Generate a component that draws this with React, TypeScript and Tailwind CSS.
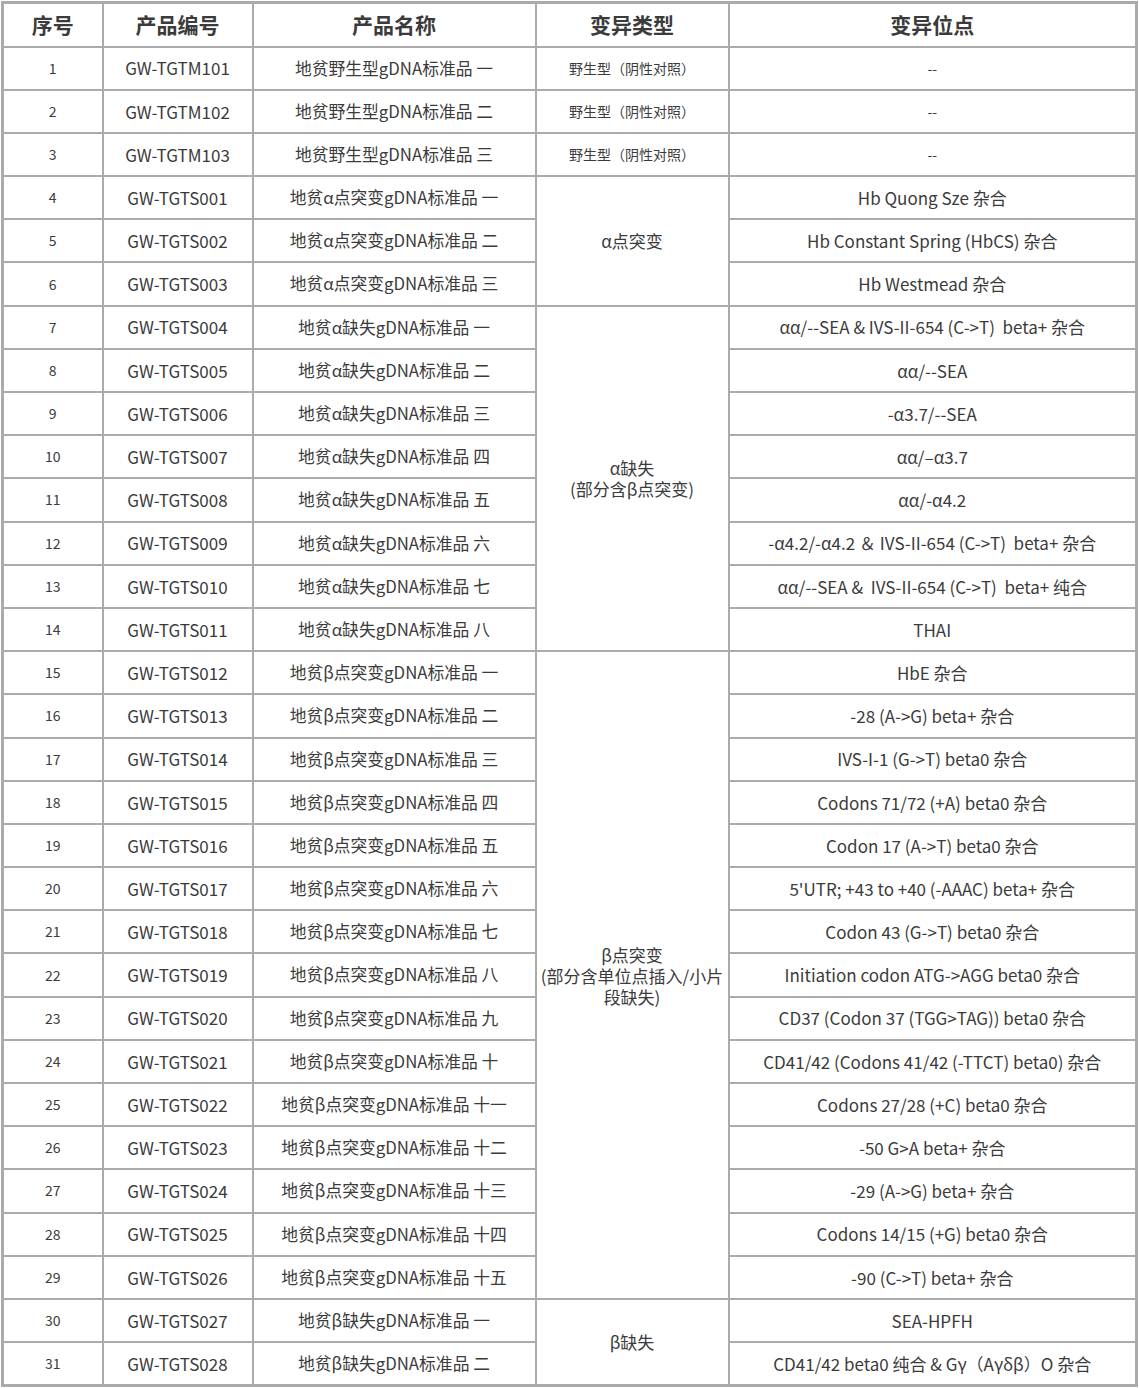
import React from "react";

type Row = {
  no: number;
  code: string;
  name: string;
  site: string;
  type?: { label: React.ReactNode; span: number; small?: boolean };
};

const n = ["一", "二", "三", "四", "五", "六", "七", "八", "九", "十", "十一", "十二", "十三", "十四", "十五"];

const rows: Row[] = [
  { no: 1, code: "GW-TGTM101", name: "地贫野生型gDNA标准品 一", site: "--", type: { label: "野生型（阴性对照）", span: 1, small: true } },
  { no: 2, code: "GW-TGTM102", name: "地贫野生型gDNA标准品 二", site: "--", type: { label: "野生型（阴性对照）", span: 1, small: true } },
  { no: 3, code: "GW-TGTM103", name: "地贫野生型gDNA标准品 三", site: "--", type: { label: "野生型（阴性对照）", span: 1, small: true } },
];

const alphaPoint = ["Hb Quong Sze 杂合", "Hb Constant Spring (HbCS) 杂合", "Hb Westmead 杂合"];
const alphaDel = [
  "αα/--SEA & IVS-II-654 (C->T)  beta+ 杂合",
  "αα/--SEA",
  "-α3.7/--SEA",
  "αα/–α3.7",
  "αα/-α4.2",
  "-α4.2/-α4.2 ＆ IVS-II-654 (C->T)  beta+ 杂合",
  "αα/--SEA &  IVS-II-654 (C->T)  beta+ 纯合",
  "THAI",
];
const betaPoint = [
  "HbE 杂合",
  "-28 (A->G) beta+ 杂合",
  "IVS-I-1 (G->T) beta0 杂合",
  "Codons 71/72 (+A) beta0 杂合",
  "Codon 17 (A->T) beta0 杂合",
  "5'UTR; +43 to +40 (-AAAC) beta+ 杂合",
  "Codon 43 (G->T) beta0 杂合",
  "Initiation codon ATG->AGG beta0 杂合",
  "CD37 (Codon 37 (TGG>TAG)) beta0 杂合",
  "CD41/42 (Codons 41/42 (-TTCT) beta0) 杂合",
  "Codons 27/28 (+C) beta0 杂合",
  "-50 G>A beta+ 杂合",
  "-29 (A->G) beta+ 杂合",
  "Codons 14/15 (+G) beta0 杂合",
  "-90 (C->T) beta+ 杂合",
];
const betaDel = ["SEA-HPFH", "CD41/42 beta0 纯合 & Gγ（Aγδβ）O 杂合"];

let seq = 4;
let ts = 1;
const pad = (v: number) => String(v).padStart(3, "0");

function addGroup(sites: string[], prefix: string, label: React.ReactNode) {
  sites.forEach((site, i) => {
    rows.push({
      no: seq++,
      code: `GW-TGTS${pad(ts++)}`,
      name: `${prefix} ${n[i]}`,
      site,
      type: i === 0 ? { label, span: sites.length } : undefined,
    });
  });
}

addGroup(alphaPoint, "地贫α点突变gDNA标准品", "α点突变");
addGroup(
  alphaDel,
  "地贫α缺失gDNA标准品",
  <>
    <div>α缺失</div>
    <div>(部分含β点突变)</div>
  </>
);
addGroup(
  betaPoint,
  "地贫β点突变gDNA标准品",
  <>
    <div>β点突变</div>
    <div>(部分含单位点插入/小片</div>
    <div>段缺失)</div>
  </>
);
addGroup(betaDel, "地贫β缺失gDNA标准品", "β缺失");

const cell = "border-2 border-[#ababab] text-center align-middle";

export default function App() {
  return (
    <div
      className="bg-white w-[1139px] h-[1388px] pl-px pt-px text-[#3b3b3b]"
      style={{ fontFamily: '"Noto Sans CJK SC", "Noto Sans", sans-serif' }}
    >
      <table className="border-collapse table-fixed w-[1137px] border-[3px] border-[#ababab]">
        <colgroup>
          <col className="w-[100px]" />
          <col className="w-[150px]" />
          <col className="w-[283px]" />
          <col className="w-[193px]" />
          <col />
        </colgroup>
        <thead>
          <tr className="h-[44px]">
            {["序号", "产品编号", "产品名称", "变异类型", "变异位点"].map((h) => (
              <th key={h} className={`${cell} text-[21px] font-bold leading-none`}>
                {h}
              </th>
            ))}
          </tr>
        </thead>
        <tbody>
          {rows.map((r) => (
            <tr key={r.no} className="h-[43.2px]">
              <td className={`${cell} text-[14px]`}>{r.no}</td>
              <td className={`${cell} text-[17px]`}>{r.code}</td>
              <td className={`${cell} text-[16.8px] whitespace-pre`}>{r.name}</td>
              {r.type && (
                <td
                  rowSpan={r.type.span}
                  className={`${cell} leading-[21px] ${r.type.small ? "text-[14px]" : "text-[17px]"}`}
                >
                  {r.type.label}
                </td>
              )}
              <td className={`${cell} whitespace-pre ${r.site === "--" ? "text-[14px]" : "text-[17px]"}`}>
                {r.site}
              </td>
            </tr>
          ))}
        </tbody>
      </table>
    </div>
  );
}
